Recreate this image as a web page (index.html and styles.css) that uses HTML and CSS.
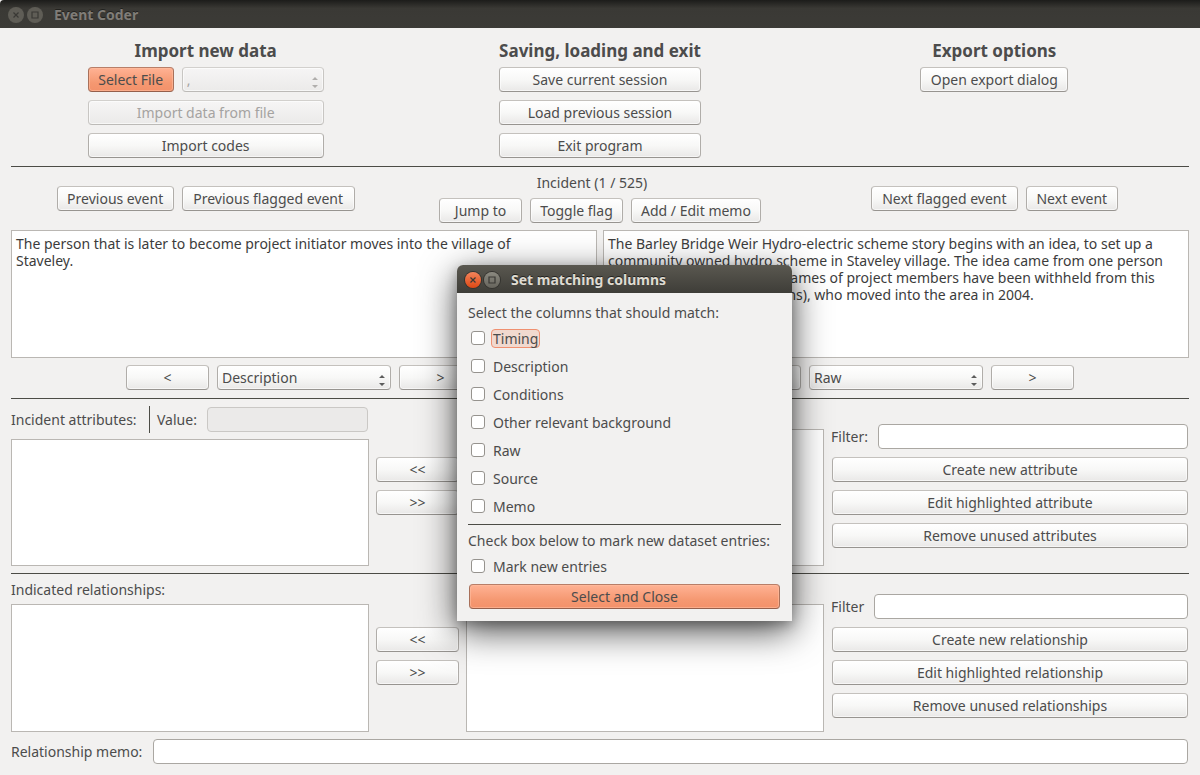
FILE: index.html
```html
<!DOCTYPE html>
<html lang="en">
<head>
<meta charset="utf-8">
<title>Event Coder</title>
<link rel="stylesheet" href="styles.css">
</head>
<body>
<div class="window">
  <header class="titlebar">
    <button class="win-btn" aria-label="Close"><svg viewBox="0 0 16 16"><path d="M5.5 5.5l5 5M10.5 5.5l-5 5"/></svg></button>
    <button class="win-btn" aria-label="Maximize"><svg viewBox="0 0 16 16"><path d="M5 5h6v6H5z"/></svg></button>
    <h1 class="title">Event Coder</h1>
  </header>
  <main class="content">
    <section class="thirds actions">
      <div class="stack import">
        <h2>Import new data</h2>
        <div class="file-row">
          <button class="btn primary">Select File</button>
          <span class="combo disabled"><select aria-label="Delimiter" disabled><option>,</option></select><svg viewBox="0 0 8 13"><path d="M1 4l3-3 3 3zM1 9l3 3 3-3z"/></svg></span>
        </div>
        <button class="btn" disabled>Import data from file</button>
        <button class="btn">Import codes</button>
      </div>
      <div class="stack session">
        <h2>Saving, loading and exit</h2>
        <button class="btn">Save current session</button>
        <button class="btn">Load previous session</button>
        <button class="btn">Exit program</button>
      </div>
      <div class="stack export">
        <h2>Export options</h2>
        <button class="btn">Open export dialog</button>
      </div>
    </section>
    <hr>
    <section class="thirds incident">
      <div class="row"><button class="btn event-prev">Previous event</button><button class="btn flag-prev">Previous flagged event</button></div>
      <div class="incident-mid">
        <p>Incident (1 / 525)</p>
        <div class="row"><button class="btn narrow">Jump to</button><button class="btn flag-toggle">Toggle flag</button><button class="btn memo-edit">Add / Edit memo</button></div>
      </div>
      <div class="row"><button class="btn flag-next">Next flagged event</button><button class="btn event-next">Next event</button></div>
    </section>
    <section class="halves">
      <div class="pane">
        <textarea class="box" aria-label="Left column text">The person that is later to become project initiator moves into the village of
Staveley.</textarea>
        <div class="row"><button class="btn narrow">&lt;</button><span class="combo"><select aria-label="Left column"><option>Description</option></select><svg viewBox="0 0 8 13"><path d="M1 4l3-3 3 3zM1 9l3 3 3-3z"/></svg></span><button class="btn narrow">&gt;</button></div>
      </div>
      <div class="pane">
        <textarea class="box" aria-label="Right column text">The Barley Bridge Weir Hydro-electric scheme story begins with an idea, to set up a
community owned hydro scheme in Staveley village. The idea came from one person
(project initiator; all of the names of project members have been withheld from this
story for data privacy reasons), who moved into the area in 2004.</textarea>
        <div class="row"><button class="btn narrow">&lt;</button><span class="combo"><select aria-label="Right column"><option>Raw</option></select><svg viewBox="0 0 8 13"><path d="M1 4l3-3 3 3zM1 9l3 3 3-3z"/></svg></span><button class="btn narrow">&gt;</button></div>
      </div>
    </section>
    <hr>
    <section class="coding attributes">
      <div class="list-col">
        <div class="value-row"><span class="attr-label">Incident attributes:</span><i class="vline"></i><label class="value-label" for="value">Value:</label><input id="value" class="field" disabled></div>
        <div class="box"></div>
      </div>
      <div class="stack"><button class="btn">&lt;&lt;</button><button class="btn">&gt;&gt;</button></div>
      <div class="list-col used"><div class="box"></div></div>
      <div class="stack">
        <div class="filter"><label for="fa">Filter:</label><input id="fa" class="field"></div>
        <button class="btn">Create new attribute</button>
        <button class="btn">Edit highlighted attribute</button>
        <button class="btn">Remove unused attributes</button>
      </div>
    </section>
    <hr>
    <section class="coding relationships">
      <div class="list-col"><p>Indicated relationships:</p><div class="box"></div></div>
      <div class="stack"><button class="btn">&lt;&lt;</button><button class="btn">&gt;&gt;</button></div>
      <div class="list-col"><p></p><div class="box"></div></div>
      <div class="stack">
        <div class="filter"><label for="fr">Filter</label><input id="fr" class="field"></div>
        <button class="btn">Create new relationship</button>
        <button class="btn">Edit highlighted relationship</button>
        <button class="btn">Remove unused relationships</button>
      </div>
    </section>
    <div class="memo"><label for="memo">Relationship memo:</label><input id="memo" class="field"></div>
  </main>
</div>

<div class="dialog" role="dialog" aria-labelledby="dlg-title">
  <header class="titlebar active">
    <button class="win-btn close" aria-label="Close"><svg viewBox="0 0 16 16"><path d="M5.5 5.5l5 5M10.5 5.5l-5 5"/></svg></button>
    <button class="win-btn" aria-label="Maximize"><svg viewBox="0 0 16 16"><path d="M5 5h6v6H5z"/></svg></button>
    <h2 class="title" id="dlg-title">Set matching columns</h2>
  </header>
  <div class="dialog-body">
    <p>Select the columns that should match:</p>
    <div class="checks">
      <label class="check focused"><input type="checkbox"><span>Timing</span></label>
      <label class="check"><input type="checkbox"><span>Description</span></label>
      <label class="check"><input type="checkbox"><span>Conditions</span></label>
      <label class="check"><input type="checkbox"><span>Other relevant background</span></label>
      <label class="check"><input type="checkbox"><span>Raw</span></label>
      <label class="check"><input type="checkbox"><span>Source</span></label>
      <label class="check"><input type="checkbox"><span>Memo</span></label>
    </div>
    <hr>
    <p class="note">Check box below to mark new dataset entries:</p>
    <label class="check"><input type="checkbox"><span>Mark new entries</span></label>
    <button class="btn primary">Select and Close</button>
  </div>
</div>
</body>
</html>
```
FILE: styles.css
```css
* { box-sizing: border-box; }
body {
  margin: 0;
  background: #f2f1f0;
  color: #4c4c4c;
  font: 14px/17px "Noto Sans", "Open Sans", sans-serif;
}
h1, h2, p { margin: 0; font-size: inherit; }
button, input, select, textarea { font: inherit; color: inherit; margin: 0; }
hr { width: 100%; height: 1px; margin: 0; border: 0; background: #4c4c46; }

.titlebar {
  display: flex;
  align-items: center;
  gap: 3px;
  height: 28px;
  padding: 1px 7px 0 8px;
  background: linear-gradient(#1c1c1a, #3a3935 30%, #3c3b37);
  color: #807d78;
}
.window .titlebar { border-top-left-radius: 4px; }
.titlebar.active {
  background: linear-gradient(#5a5850, #3e3d38);
  border-radius: 6px 6px 0 0;
  color: #dfdbd2;
}
.title { padding-left: 8px; font-size: 14px; font-weight: 700; text-shadow: 0 -1px #22221f; }
.win-btn {
  width: 16px;
  height: 16px;
  padding: 0;
  border: 0;
  border-radius: 50%;
  background: #5f5d56;
}
.win-btn svg { display: block; width: 16px; height: 16px; fill: none; stroke: #3a3935; stroke-width: 1.2; }
.active .win-btn { background: linear-gradient(#8b8980, #66645c); box-shadow: 0 0 0 1px #34332f; }
.active .close { background: linear-gradient(#f4845c, #dd4814); }

.content { padding: 0 11px 11px; }
.thirds { display: grid; grid-template-columns: repeat(3, 1fr); column-gap: 5px; justify-items: center; }
.stack { display: flex; flex-direction: column; gap: 8px; padding: 0 1px; }
.row { display: flex; justify-content: center; gap: 8px; }

.btn, .combo select {
  height: 25px;
  padding: 0 7px;
  border: 1px solid #b0ada9;
  border-color: #c4c1bd #b0ada9 #979490;
  border-radius: 4px;
  background: linear-gradient(#fff, #f8f8f7 50%, #e9e8e7);
  box-shadow: inset 0 0 0 1px rgba(255, 255, 255, .6);
  line-height: 17px;
  white-space: nowrap;
}
.btn:disabled, .combo select:disabled {
  border-color: #d2d0cd #c8c6c3 #bcbab7;
  background: linear-gradient(#f6f5f5, #ebeae9);
  color: #a5a3a1;
  opacity: 1;
}
.btn.primary {
  border-color: #b87e68 #a8705a #955f4b;
  background: linear-gradient(#ffb294, #f59871 65%, #f3916a);
  box-shadow: inset 0 0 0 1px rgba(255, 190, 160, .6);
}
.btn.narrow { width: 83px; }
.combo { position: relative; display: flex; width: 174px; }
.combo select { width: 100%; padding: 0 4px; appearance: none; }
.combo svg { position: absolute; right: 5px; bottom: 3px; width: 8px; height: 13px; fill: #5c5c5c; pointer-events: none; }
.combo.disabled { flex: 1; }
.combo.disabled svg { fill: #b0aeac; }

.actions { padding: 11px 0 8px; }
.actions h2 { height: 20px; font-size: 17px; line-height: 24px; text-align: center; white-space: nowrap; }
.file-row { display: flex; gap: 8px; }
.import { width: 238px; }
.import .primary { width: 86px; padding: 0; }
.session { width: 204px; }
.export { width: 150px; }
.session h2 { margin: 0 -8px; }

.incident { height: 63px; padding-top: 7px; align-items: center; }
.incident > .row { padding-bottom: 7px; }
.incident-mid { display: flex; flex-direction: column; gap: 7px; height: 56px; text-align: center; }
.incident p { padding-right: 16px; }
.event-prev { width: 117px; }
.flag-prev { width: 173px; }
.flag-toggle { width: 93px; }
.memo-edit { width: 130px; }
.flag-next { width: 147px; }
.event-next { width: 92px; }

.halves { display: grid; grid-template-columns: 1fr 1fr; gap: 6px; padding-bottom: 8px; }
.pane { display: grid; gap: 7px; }
.box { width: 100%; border: 1px solid #bab7b3; background: #fff; }
textarea.box { display: block; height: 128px; padding: 4px; resize: none; overflow: hidden; white-space: pre; color: #3c3c3c; outline: 0; }

.coding { display: grid; grid-template-columns: minmax(0, 1fr) 83px minmax(0, 1fr) minmax(0, 1fr); gap: 7px; align-items: center; }
.coding > .stack { padding-left: 0; }
.coding > .stack:nth-child(2) { padding: 0; }
.coding > .stack:last-child > .btn { margin-left: 1px; }
.list-col { display: flex; flex-direction: column; height: 100%; }
.list-col .box { flex: 1; }
.attributes { height: 174px; }
.attributes .list-col { gap: 6px; padding: 7px 0; }
.attributes .used { padding-top: 30px; }
.relationships { height: 165px; }
.relationships .list-col { padding: 7px 0; gap: 6px; }
.relationships p { height: 17px; }
.relationships .stack { margin-bottom: 1px; }
.value-row { display: flex; align-items: center; gap: 7px; padding-right: 1px; white-space: nowrap; }
.attr-label { width: 131px; }
.value-label { width: 43px; }
.filter label { min-width: 36px; }
.attributes .filter label { min-width: 40px; }
.memo label { min-width: 135px; }
.vline { width: 1px; height: 27px; background: #4c4c46; }
.field {
  flex: 1;
  min-width: 0;
  height: 25px;
  padding: 0 4px;
  border: 1px solid #aaa7a2;
  border-radius: 4px;
  background: #fff;
}
.field:disabled { border-color: #cac8c5; background: #ebeae9; }
.filter, .memo { display: flex; align-items: center; gap: 7px; }
.memo { padding-right: 1px; }

.dialog {
  position: absolute;
  left: 457px;
  top: 265px;
  width: 335px;
  border-radius: 6px 6px 0 0;
  background: #f2f1f0;
  box-shadow: 0 10px 36px rgba(0, 0, 0, .7), 0 4px 12px rgba(0, 0, 0, .25);
}
.dialog-body { display: flex; flex-direction: column; padding: 11px 11px 12px; white-space: nowrap; }
.checks { display: grid; gap: 8px; padding: 7px 0 8px; }
.check { display: flex; align-items: center; gap: 6px; height: 20px; padding-left: 3px; }
.check input {
  width: 14px;
  height: 14px;
  border: 1px solid #96938e;
  border-radius: 3px;
  background: #fff;
  appearance: none;
}
.check span { padding: 0 1px; border: 1px solid transparent; border-radius: 4px; }
.focused span { border-color: #f09070; background: #f1d9cf; }
.note { padding: 7px 0; }
.dialog-body .primary { margin: 8px 1px 0; }
```
